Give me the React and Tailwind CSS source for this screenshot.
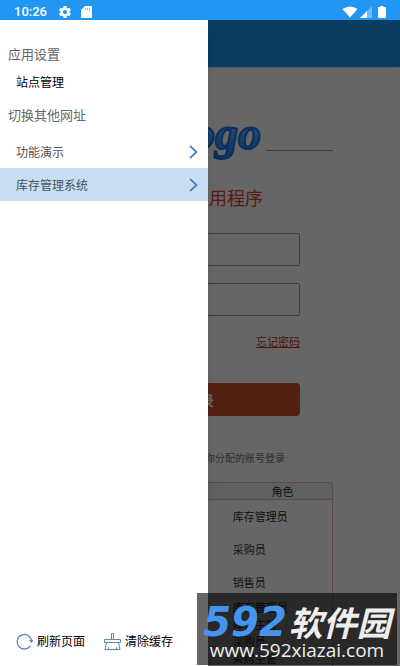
const loginRows = [
  { account: 'kcgl', role: '库存管理员', tall: true },
  { account: 'cgy', role: '采购员', tall: true },
  { account: 'xsy', role: '销售员', tall: true },
  { account: 'kcgl2', role: '库存管理员' },
  { account: 'kczg', role: '库存主管' },
  { account: 'cgy2', role: '采购员' },
  { account: 'cgzg', role: '采购主管' },
];

const sites = [
  { name: '功能演示' },
  { name: '库存管理系统', active: true },
];

function GearIcon() {
  return (
    <svg viewBox="2 2 20 20" className="size-3" fill="currentColor" aria-hidden="true">
      <path d="M19.43 12.98c.04-.32.07-.64.07-.98s-.03-.66-.07-.98l2.11-1.65c.19-.15.24-.42.12-.64l-2-3.46c-.12-.22-.39-.3-.61-.22l-2.49 1c-.52-.4-1.08-.73-1.69-.98l-.38-2.65C14.46 2.18 14.25 2 14 2h-4c-.25 0-.46.18-.49.42l-.38 2.65c-.61.25-1.17.59-1.69.98l-2.49-1c-.23-.09-.49 0-.61.22l-2 3.46c-.13.22-.07.49.12.64l2.11 1.65c-.04.32-.07.65-.07.98s.03.66.07.98l-2.11 1.65c-.19.15-.24.42-.12.64l2 3.46c.12.22.39.3.61.22l2.49-1c.52.4 1.08.73 1.69.98l.38 2.65c.03.24.24.42.49.42h4c.25 0 .46-.18.49-.42l.38-2.65c.61-.25 1.17-.59 1.69-.98l2.49 1c.23.09.49 0 .61-.22l2-3.46c.12-.22.07-.49-.12-.64l-2.11-1.65zM12 15.5c-1.93 0-3.5-1.57-3.5-3.5s1.57-3.5 3.5-3.5 3.5 1.57 3.5 3.5-1.57 3.5-3.5 3.5z" />
    </svg>
  );
}

function StatusBar() {
  return (
    <div className="flex h-5 items-center bg-[#2196f3] pr-2.5 pl-3.5 text-white">
      <span className="mt-1 font-[Roboto,sans-serif] text-[13px] leading-4 font-medium">10:26</span>
      <div className="mt-1 ml-3 flex items-center gap-2.5">
        <GearIcon />
        <svg viewBox="0 0 11 12" className="h-3 w-[11px]" aria-hidden="true">
          <path d="M4 0h6q1 0 1 1v10q0 1-1 1H1q-1 0-1-1V4z" fill="#fff" />
          <path d="M4.5 2v2M6.5 2v2M8.5 2v2" stroke="#2196f3" strokeWidth="0.6" />
        </svg>
      </div>
      <div className="mt-1 ml-auto flex items-center">
        <svg viewBox="0 0 16 12" className="h-3 w-4" fill="#fff" aria-hidden="true">
          <path d="M0.5 3Q8-2 15.5 3L8 11.5z" />
        </svg>
        <svg viewBox="0 0 12 12" className="ml-0.5 size-3" aria-hidden="true">
          <path d="M12 0v12H0z" fill="#fff" opacity="0.35" />
          <path d="M7 5v7H0z" fill="#fff" />
        </svg>
        <svg viewBox="0 0 8 12" className="mr-1 ml-1.5 h-3 w-2" fill="#fff" aria-hidden="true">
          <path d="M2.5 0h3v1H7q1 0 1 1v9q0 1-1 1H1q-1 0-1-1V2q0-1 1-1h1.5z" />
        </svg>
      </div>
    </div>
  );
}

function Logo() {
  return (
    <svg viewBox="0 0 124 50" className="h-[50px] w-[124px] shrink-0" role="img" aria-label="logo">
      <defs>
        <linearGradient id="logoFill" x1="0" y1="0" x2="0" y2="1">
          <stop offset="0.3" stopColor="#82b8ff" />
          <stop offset="0.9" stopColor="#1c86ff" />
        </linearGradient>
      </defs>
      <text
        x="123"
        y="32"
        textAnchor="end"
        className="font-['Liberation_Serif',serif] text-[46px] font-bold italic"
        fill="url(#logoFill)"
        stroke="#1a74e8"
        strokeWidth="2"
        strokeLinejoin="round"
      >
        logo
      </text>
    </svg>
  );
}

function LoginPage() {
  return (
    <main className="flex flex-1 flex-col bg-white">
      <header className="h-[47px] shrink-0 bg-[#2196f3] shadow-sm" />
      <div className="mx-auto mt-[50px] flex w-2/3 items-center gap-1">
        <hr className="mt-4 flex-1 border-[#8a9db8]" />
        <Logo />
        <hr className="mt-4 flex-1 border-[#8a9db8]" />
      </div>
      <h1 className="mt-[18px] text-center text-lg leading-6 text-[#d9442c]">移动端应用程序</h1>
      <form className="mx-auto mt-6 flex w-1/2 flex-col">
        <input aria-label="账号" className="h-[33px] rounded-xs border border-[#999]" />
        <input
          aria-label="密码"
          type="password"
          className="mt-[17px] h-[33px] rounded-xs border border-[#999]"
        />
        <a href="#forgot" className="mt-4 self-end text-[11px] leading-[18px] text-[#c0392b] underline">
          忘记密码
        </a>
        <button type="button" className="mt-[33px] h-[33px] rounded-sm bg-[#cc532f] text-sm font-bold text-white">
          登录
        </button>
      </form>
      <p className="mt-[34px] text-center text-[10px] leading-4 text-[#777]">
        请使用系统管理员给你分配的账号登录
      </p>
      <table className="mx-auto mt-4 w-2/3 table-fixed border-collapse border border-[#e6bcab] text-[11px] leading-4 text-[#333]">
        <thead>
          <tr className="border-b border-[#e6bcab] bg-[#ebeff2]">
            <th className="p-0 font-normal">账号</th>
            <th className="w-[100px] p-0 font-normal">角色</th>
          </tr>
        </thead>
        <tbody>
          {loginRows.map((row) => (
            <tr key={row.account} className={row.tall ? 'h-[33px]' : 'h-[17px]'}>
              <td className="p-0 pl-2">{row.account}</td>
              <td className="p-0">{row.role}</td>
            </tr>
          ))}
        </tbody>
      </table>
    </main>
  );
}

function Chevron() {
  return (
    <svg viewBox="0 0 9 14" className="h-3.5 w-[9px]" fill="none" stroke="#4a7fb8" strokeWidth="1.8" aria-hidden="true">
      <path d="M1 0.8 7.5 7 1 13.2" />
    </svg>
  );
}

function Drawer() {
  return (
    <aside className="absolute inset-y-0 left-0 flex w-[52%] flex-col bg-white shadow-lg">
      <h2 className="mt-6 px-2 text-[13px] leading-5 text-[#666]">应用设置</h2>
      <button type="button" className="mt-2 px-4 text-left text-xs leading-5 text-black">
        站点管理
      </button>
      <h2 className="mt-[13px] px-2 text-[13px] leading-5 text-[#666]">切换其他网址</h2>
      <nav className="mt-2.5">
        {sites.map((site) => (
          <a
            key={site.name}
            href="#site"
            className={`flex h-[33px] items-center justify-between pr-2.5 pl-4 text-xs ${
              site.active ? 'bg-[#c8def3] text-[#45525e]' : 'text-[#555]'
            }`}
          >
            {site.name}
            <Chevron />
          </a>
        ))}
      </nav>
      <div className="mt-auto mb-[15px] flex gap-[19px] px-4 text-xs leading-5 text-black">
        <button type="button" className="flex items-center gap-1">
          <svg viewBox="0 0 17 17" className="size-[17px]" fill="none" stroke="#5b87b8" strokeWidth="1.2" aria-hidden="true">
            <path d="M14.3 12.8A7.2 7.2 0 1 1 15.6 8.5" />
            <path d="M13.5 7l2.1 2 1.2-2.2" />
          </svg>
          刷新页面
        </button>
        <button type="button" className="flex items-center gap-1">
          <svg viewBox="0 0 17 17" className="size-[17px]" fill="none" stroke="#5b87b8" aria-hidden="true">
            <path d="M7.5 6.5v-6h2v6M.5 9.500v-3h16v3zM2.500 9.500 1 16.500h15L14.500 9.500M4.500 16.500v-2.500M12.500 16.500v-2.500" />
          </svg>
          清除缓存
        </button>
      </div>
    </aside>
  );
}

function Watermark() {
  return (
    <div className="absolute right-[3px] bottom-px flex h-[72px] w-[200px] flex-col items-center bg-black/60 pt-[11px]">
      <div className="flex items-center text-[34px] leading-9 font-bold whitespace-nowrap text-[#eee] italic">
        <span className="font-['DejaVu_Sans',sans-serif] text-[40px] text-[#4595f0]">592</span>
        <span className="ml-0.5">软件园</span>
      </div>
      <span className="font-['Open_Sans',sans-serif] text-[19px] leading-5 text-[#eee]">www.592xiazai.com</span>
    </div>
  );
}

export default function App() {
  return (
    <div className="relative flex h-screen flex-col overflow-hidden font-['Noto_Sans_CJK_SC',sans-serif]">
      <StatusBar />
      <div className="relative flex min-h-0 flex-1 flex-col overflow-hidden">
        <LoginPage />
        <div className="absolute inset-0 bg-black/60" />
        <Drawer />
      </div>
      <Watermark />
    </div>
  );
}
